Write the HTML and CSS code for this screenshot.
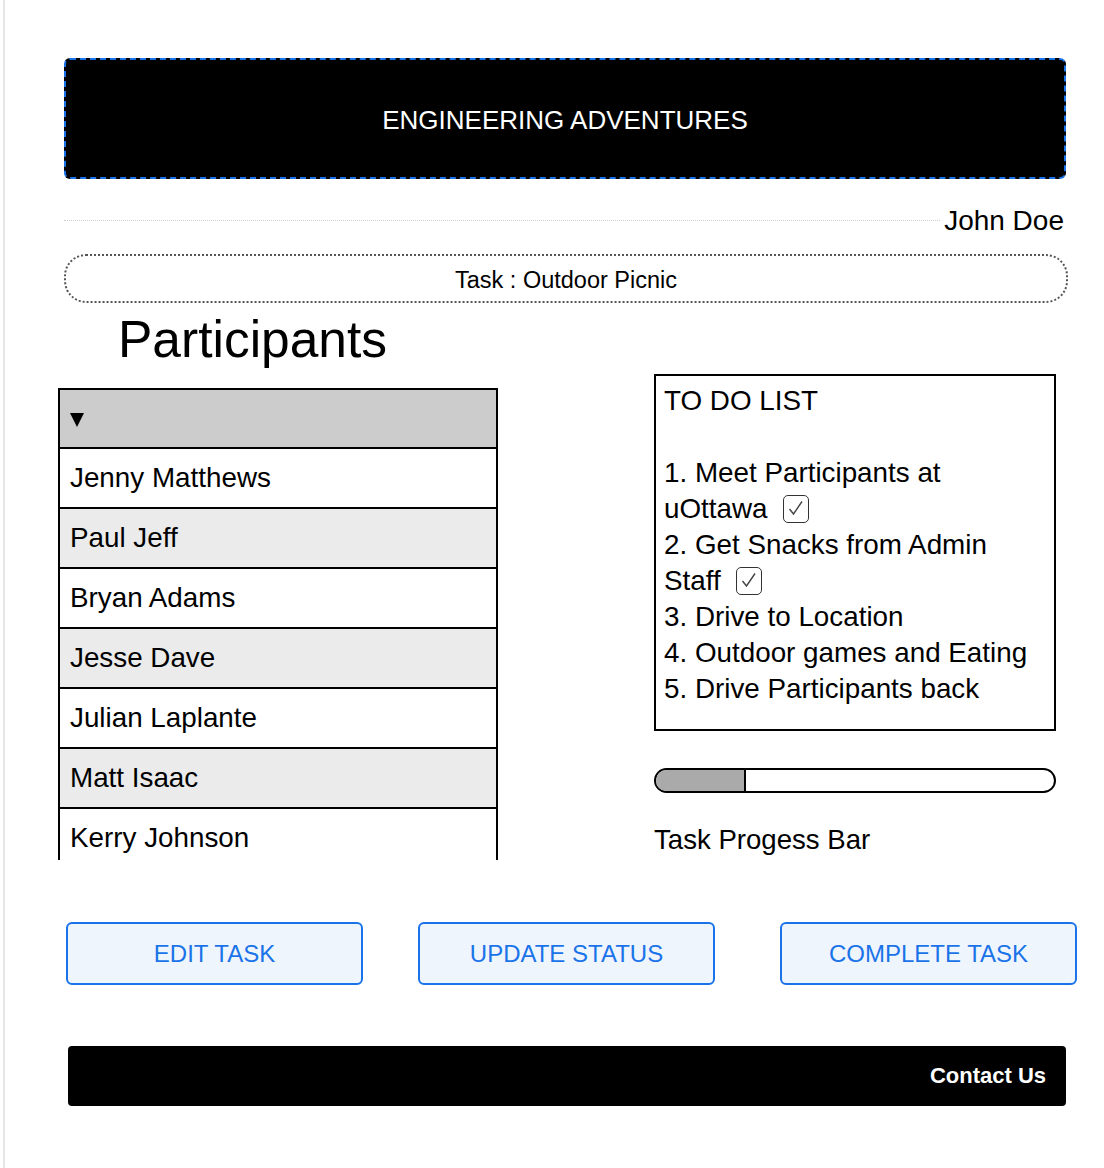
FILE: index.html
```html
<!DOCTYPE html>
<html lang="en">
<head>
  <meta charset="UTF-8" />
  <meta name="viewport" content="width=device-width, initial-scale=1" />
  <title>Task - Engineering Adventures</title>
  <link rel="stylesheet" href="styles.css">
</head>
<body>
  <div class="page">
    <header class="banner">ENGINEERING ADVENTURES</header>

    <div class="user-row">
      <span class="rule"></span>
      <span class="user-name">John Doe</span>
    </div>

    <div class="task-title">Task : Outdoor Picnic</div>

    <h1 class="section-title">Participants</h1>

    <div class="content">
      <div class="participants">
        <div class="list-head"><span class="caret"></span></div>
        <div class="person">Jenny Matthews</div>
        <div class="person alt">Paul Jeff</div>
        <div class="person">Bryan Adams</div>
        <div class="person alt">Jesse Dave</div>
        <div class="person">Julian Laplante</div>
        <div class="person alt">Matt Isaac</div>
        <div class="person">Kerry Johnson</div>
      </div>

      <div class="side">
        <div class="todo">
          TO DO LIST<br><br>
          1. Meet Participants at uOttawa <span class="check"><svg viewBox="0 0 26 28" width="26" height="28"><path d="M6.5 15 L10.5 20 L19 7.5" fill="none" stroke="#444" stroke-width="1.4"/></svg></span><br>
          2. Get Snacks from Admin Staff <span class="check"><svg viewBox="0 0 26 28" width="26" height="28"><path d="M6.5 15 L10.5 20 L19 7.5" fill="none" stroke="#444" stroke-width="1.4"/></svg></span><br>
          3. Drive to Location<br>
          4. Outdoor games and Eating<br>
          5. Drive Participants back
        </div>

        <div class="progress"><div class="progress-fill" style="width: 22%"></div></div>
        <p class="progress-label">Task Progess Bar</p>
      </div>
    </div>

    <div class="actions">
      <button class="btn">EDIT TASK</button>
      <button class="btn">UPDATE STATUS</button>
      <button class="btn btn-last">COMPLETE TASK</button>
    </div>

    <footer class="footer">Contact Us</footer>
  </div>
</body>
</html>
```

FILE: styles.css
```css
body { margin: 0; background: #fff; font-family: "Liberation Sans", Arial, sans-serif; color: #000; }
.page { margin-left: 3px; border-left: 2px solid #e6e6e6; min-height: 100vh; padding: 58px 0 1px; box-sizing: border-box; }

.banner { margin-left: 59px; width: 1002px; height: 121px; box-sizing: border-box; padding-top: 4px; background: #000; border: 2px dashed #1a73e8; border-radius: 6px; color: #fff; font-size: 26px; display: flex; align-items: center; justify-content: center; }

.user-row { margin: 23px 0 0 59px; width: 1000px; height: 36px; display: flex; align-items: center; }
.user-row .rule { flex: 1; border-top: 1px dotted #cfcfcf; margin-right: 4px; }
.user-name { font-size: 28px; padding-top: 2px; }

.task-title { margin: 16px 0 0 59px; width: 1004px; height: 49px; box-sizing: border-box; padding-top: 3px; border: 2px dotted #555; border-radius: 22px; display: flex; align-items: center; justify-content: center; font-size: 23.5px; }

.section-title { margin: 6px 0 0 113px; font-size: 51.5px; line-height: 60px; font-weight: normal; }

.content { display: flex; align-items: flex-start; margin-left: 53px; }

.participants { margin-top: 19px; width: 440px; height: 472px; box-sizing: border-box; overflow: hidden; border: 2px solid #000; border-bottom: none; }
.list-head { height: 59px; background: #ccc; border-bottom: 2px solid #000; box-sizing: border-box; display: flex; align-items: center; padding-left: 10px; }
.caret { width: 0; height: 0; border-left: 7px solid transparent; border-right: 7px solid transparent; border-top: 14px solid #000; margin-top: 3px; }
.person { height: 60px; box-sizing: border-box; border-bottom: 2px solid #000; padding-left: 10px; display: flex; align-items: center; font-size: 27.8px; background: #fff; }
.person.alt { background: #ebebeb; }

.side { margin: 5px 0 0 156px; width: 402px; }
.todo { border: 2px solid #000; padding: 7px 8px 22px; font-size: 27.8px; line-height: 36px; }
.check { display: inline-block; width: 26px; height: 28px; box-sizing: border-box; border: 1.5px solid #333; border-radius: 5px; vertical-align: middle; margin-left: 8px; position: relative; top: -2px; overflow: hidden; }
.check svg { display: block; margin: -1.5px 0 0 -1.5px; }

.progress { margin-top: 37px; height: 25px; box-sizing: border-box; border: 2px solid #000; border-radius: 13px; overflow: hidden; background: #fff; }
.progress-fill { height: 100%; background: #aaa; border-right: 2px solid #000; }
.progress-label { margin: 29px 0 0; font-size: 27.6px; line-height: 36px; }

.actions { display: flex; gap: 55px; margin: 62px 0 0 61px; }
.btn { width: 297px; height: 63px; box-sizing: border-box; background: #eef5fd; border: 2px solid #1a73e8; border-radius: 6px; color: #1a73e8; font-family: inherit; font-size: 24px; cursor: pointer; }
.btn-last { margin-left: 10px; }

.footer { margin: 61px 0 0 63px; width: 998px; height: 60px; box-sizing: border-box; background: #000; border-radius: 4px; color: #fff; font-weight: bold; font-size: 22px; display: flex; align-items: center; justify-content: flex-end; padding-right: 20px; }
```
